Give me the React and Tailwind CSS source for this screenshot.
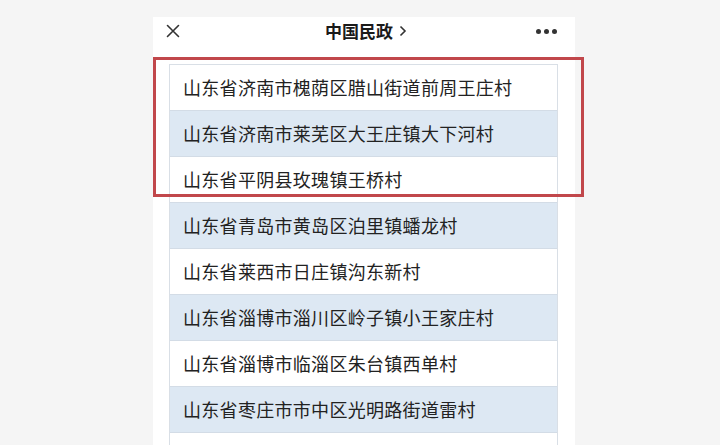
import React from 'react';

const places = [
    '山东省济南市槐荫区腊山街道前周王庄村',
    '山东省济南市莱芜区大王庄镇大下河村',
    '山东省平阴县玫瑰镇王桥村',
    '山东省青岛市黄岛区泊里镇蟠龙村',
    '山东省莱西市日庄镇沟东新村',
    '山东省淄博市淄川区岭子镇小王家庄村',
    '山东省淄博市临淄区朱台镇西单村',
    '山东省枣庄市市中区光明路街道雷村',
    '山东省枣庄市峄城区阴平镇',
];

const App = () => {
    return (
        <div
            className="relative h-[445px] w-[720px] overflow-hidden bg-[#f5f5f5]"
            style={{ fontFamily: '"Noto Sans CJK SC", "Noto Sans", sans-serif' }}
        >
            <div className="ml-[153px] mt-[17px] h-[440px] w-[422px] bg-white">
                {/* Top bar */}
                <div className="flex h-[28px] items-center justify-between pl-[13px] pr-[18px]">
                    <svg width="14" height="14" viewBox="0 0 14 14">
                        <path d="M1.5 1.5 L12.5 12.5 M12.5 1.5 L1.5 12.5" stroke="#333" strokeWidth="1.6" strokeLinecap="round" />
                    </svg>
                    <div className="ml-[16px] flex items-center gap-[6px] text-[17px] font-semibold text-[#1a1a1a]">
                        <span>中国民政</span>
                        <svg width="8" height="12" viewBox="0 0 8 12">
                            <path d="M1.5 1.5 L6 6 L1.5 10.5" fill="none" stroke="#333" strokeWidth="1.6" />
                        </svg>
                    </div>
                    <div className="flex items-center gap-[3px]">
                        <span className="h-[5px] w-[5px] rounded-full bg-[#333]" />
                        <span className="h-[5px] w-[5px] rounded-full bg-[#333]" />
                        <span className="h-[5px] w-[5px] rounded-full bg-[#333]" />
                    </div>
                </div>

                {/* List */}
                <div className="ml-[16px] mt-[19px] w-[389px] border-x border-t border-[#d9dfe6]">
                    {places.map((p, i) => (
                        <div
                            key={i}
                            className={`flex h-[46px] items-center border-b border-[#d3dce6] pl-[13px] text-[18px] tracking-[0.3px] text-[#222] ${
                                i % 2 === 1 ? 'bg-[#dde8f3]' : 'bg-white'
                            }`}
                        >
                            {p}
                        </div>
                    ))}
                </div>
            </div>

            {/* highlight box drawn over the list */}
            <div className="absolute left-[153px] top-[57px] h-[140px] w-[431px] border-[3px] border-[#c1474b]" />
        </div>
    );
};

export default App;
